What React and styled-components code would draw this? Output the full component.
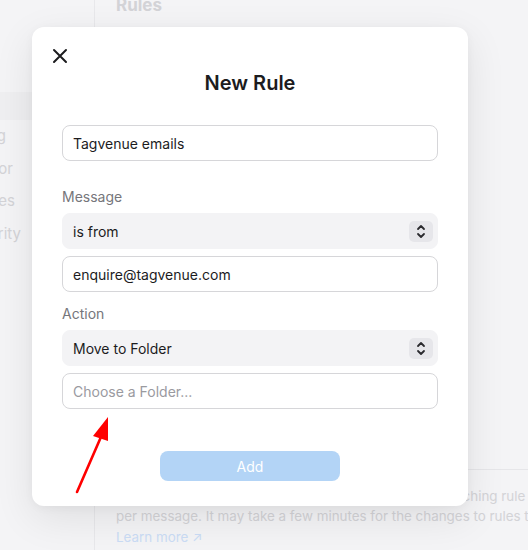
import React from "react";
import styled, { createGlobalStyle } from "styled-components";

const GlobalStyles = createGlobalStyle`
  html, body {
    margin: 0;
    height: 100%;
    overflow: hidden;
    background: #f4f4f6;
    font-family: Inter, "Noto Sans", sans-serif;
  }
  #root {
    height: 100%;
  }
`;

const Page = styled.div`
  position: relative;
  display: flex;
  height: 550px;
  width: 528px;
  overflow: hidden;
  color: #d3d3d7;
`;

const Sidebar = styled.nav`
  width: 94px;
  flex-shrink: 0;
  border-right: 1px solid #e8e8eb;
  padding-top: 92px;
  display: flex;
  flex-direction: column;
`;

const SideBand = styled.div`
  height: 28px;
  background: #efeff1;
`;

// only the tail of each label shows, the rest is scrolled past the window edge
const SideItem = styled.div`
  width: ${(p) => p.$tail}px;
  font-size: 15px;
  line-height: 32.6px;
  white-space: nowrap;
  direction: rtl;
  overflow: hidden;
`;

const Main = styled.main`
  flex: 1;
  display: flex;
  flex-direction: column;
  min-width: 0;
`;

const PageTitle = styled.h2`
  margin: -7px 0 0 21px;
  font-size: 17px;
  font-weight: 700;
  line-height: 24px;
`;

const Spacer = styled.div`
  flex: 1;
`;

const Footer = styled.div`
  border-top: 1px solid #e6e6e9;
  padding: 16px 0 3px 21px;
  font-size: 13.4px;
  line-height: 20.5px;
  white-space: nowrap;
`;

const FooterLink = styled.span`
  color: #cbdcf5;
`;

const Modal = styled.div`
  position: absolute;
  left: 32px;
  top: 27px;
  width: 436px;
  height: 479px;
  box-sizing: border-box;
  background: #fff;
  border-radius: 12px;
  box-shadow: 0 12px 40px rgba(0, 0, 0, 0.09), 0 2px 10px rgba(0, 0, 0, 0.04);
  padding: 21px 30px 0;
  display: flex;
  flex-direction: column;
  color: #1c1c1e;
`;

const CloseButton = styled.button`
  align-self: flex-start;
  margin-left: -10px;
  width: 16px;
  height: 16px;
  padding: 0;
  border: 0;
  background: none;
  display: flex;
  color: #1c1c1e;
`;

const Title = styled.h1`
  margin: 7px 0 30px;
  text-align: center;
  font-size: 20px;
  line-height: 24px;
  font-weight: 600;
`;

const Field = styled.div`
  height: 36px;
  box-sizing: border-box;
  border-radius: 8px;
  display: flex;
  align-items: center;
  padding: 0 4px 0 10px;
  font-size: 14px;
  margin-top: ${(p) => p.$gap || 0}px;
  border: 1px solid ${(p) => (p.$select ? "#f3f3f5" : "#d6d6d9")};
  background: ${(p) => (p.$select ? "#f3f3f5" : "#fff")};
  color: ${(p) => (p.$placeholder ? "#9a9a9f" : "#1c1c1e")};
`;

const FieldText = styled.span`
  flex: 1;
`;

const Stepper = styled.span`
  width: 24px;
  height: 21px;
  border-radius: 5px;
  background: #e6e6ea;
  display: flex;
  align-items: center;
  justify-content: center;
  color: #2a2a2e;
`;

const Label = styled.div`
  font-size: 14px;
  line-height: 20px;
  color: #76767b;
  margin: ${(p) => p.$top}px 0 6px;
`;

const AddButton = styled.button`
  align-self: center;
  margin-top: 42px;
  width: 180px;
  height: 30px;
  border: 0;
  border-radius: 8px;
  background: #b3d4f6;
  color: #fff;
  font-family: inherit;
  font-size: 14px;
`;

const Arrow = styled.svg`
  position: absolute;
  left: 70px;
  top: 410px;
  overflow: visible;
`;

function Chevrons() {
  return (
    <Stepper>
      <svg width="10" height="15" viewBox="0 0 10 15" fill="none" stroke="currentColor" strokeWidth="1.8" strokeLinecap="round" strokeLinejoin="round">
        <path d="M2 5 L5 2 L8 5" />
        <path d="M2 10 L5 13 L8 10" />
      </svg>
    </Stepper>
  );
}

export default function App() {
  return (
    <>
      <GlobalStyles />
      <Page>
        <Sidebar>
          <SideBand />
          <SideItem $tail={6}>Sending</SideItem>
          <SideItem $tail={13}>Editor</SideItem>
          <SideItem $tail={15}>Templates</SideItem>
          <SideItem $tail={21}>Security</SideItem>
        </Sidebar>
        <Main>
          <PageTitle>Rules</PageTitle>
          <Spacer />
          <Footer>
            Rules are applied from top to bottom. Only the first matching rule applies
            <br />
            per message. It may take a few minutes for the changes to rules to take effect.
            <br />
            <FooterLink>Learn more ↗</FooterLink>
          </Footer>
        </Main>

        <Modal>
          <CloseButton aria-label="Close">
            <svg width="16" height="16" viewBox="0 0 16 16" fill="none" stroke="currentColor" strokeWidth="2" strokeLinecap="round">
              <path d="M2 2 L14 14 M14 2 L2 14" />
            </svg>
          </CloseButton>
          <Title>New Rule</Title>

          <Field>
            <FieldText>Tagvenue emails</FieldText>
          </Field>

          <Label $top={26}>Message</Label>
          <Field $select>
            <FieldText>is from</FieldText>
            <Chevrons />
          </Field>
          <Field $gap={7}>
            <FieldText>enquire@tagvenue.com</FieldText>
          </Field>

          <Label $top={12}>Action</Label>
          <Field $select>
            <FieldText>Move to Folder</FieldText>
            <Chevrons />
          </Field>
          <Field $gap={7} $placeholder>
            <FieldText>Choose a Folder...</FieldText>
          </Field>

          <AddButton>Add</AddButton>
        </Modal>

        <Arrow width="45" height="90" viewBox="0 0 45 90">
          <path d="M7 82 L34 20" stroke="#f00" strokeWidth="2.6" strokeLinecap="round" />
          <path d="M38 7 L23 26 L38 31 Z" fill="#f00" />
        </Arrow>
      </Page>
    </>
  );
}
